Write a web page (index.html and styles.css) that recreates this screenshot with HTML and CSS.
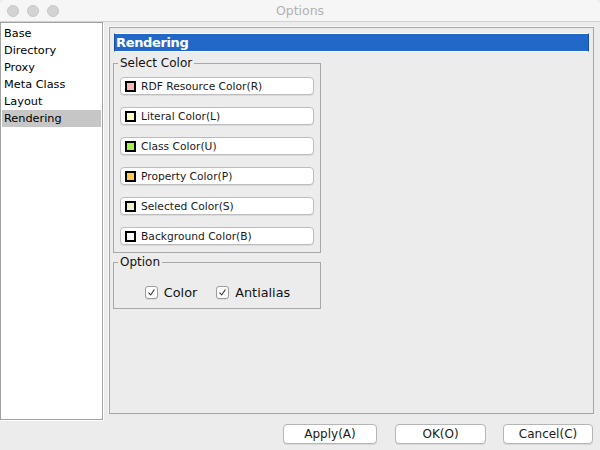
FILE: index.html
```html
<!DOCTYPE html>
<html>
<head>
<meta charset="utf-8">
<link rel="stylesheet" href="styles.css">
</head>
<body>
<div class="window">
  <div class="titlebar">
    <div class="lights"><span class="light"></span><span class="light"></span><span class="light"></span></div>
    <div class="title">Options</div>
    <div></div>
  </div>
  <div class="main">
    <ul class="sidebar">
      <li>Base</li>
      <li>Directory</li>
      <li>Proxy</li>
      <li>Meta Class</li>
      <li>Layout</li>
      <li class="selected">Rendering</li>
    </ul>
    <div class="panel">
      <div class="heading">Rendering</div>
      <fieldset class="group colors">
        <legend>Select Color</legend>
        <button class="color-btn"><span class="swatch pink"></span>RDF Resource Color(R)</button>
        <button class="color-btn"><span class="swatch yellow"></span>Literal Color(L)</button>
        <button class="color-btn"><span class="swatch lime"></span>Class Color(U)</button>
        <button class="color-btn"><span class="swatch orange"></span>Property Color(P)</button>
        <button class="color-btn"><span class="swatch selcol"></span>Selected Color(S)</button>
        <button class="color-btn"><span class="swatch white"></span>Background Color(B)</button>
      </fieldset>
      <fieldset class="group options">
        <legend>Option</legend>
        <div class="checks">
          <label class="check"><span class="box"><svg width="13" height="13" viewBox="0 0 13 13"><path d="M3.3 6.9 L5.5 9.4 L9.6 3.4" fill="none" stroke="#3a3a3a" stroke-width="1.3" stroke-linecap="round" stroke-linejoin="round"/></svg></span>Color</label>
          <label class="check"><span class="box"><svg width="13" height="13" viewBox="0 0 13 13"><path d="M3.3 6.9 L5.5 9.4 L9.6 3.4" fill="none" stroke="#3a3a3a" stroke-width="1.3" stroke-linecap="round" stroke-linejoin="round"/></svg></span>Antialias</label>
        </div>
      </fieldset>
    </div>
  </div>
  <div class="footer">
    <button class="btn apply">Apply(A)</button>
    <button class="btn ok">OK(O)</button>
    <button class="btn cancel">Cancel(C)</button>
  </div>
</div>
</body>
</html>
```

FILE: styles.css
```css
* { box-sizing: border-box; }
html, body { margin: 0; padding: 0; }
body { font-family: "DejaVu Sans", sans-serif; background: #ececec; }
.window { width: 600px; height: 450px; background: #ececec; display: flex; flex-direction: column; overflow: hidden; }

.titlebar { height: 22px; background: #f6f6f6; border-bottom: 1px solid #d2d2d2; display: grid; grid-template-columns: 1fr auto 1fr; align-items: center; border-radius: 5px 5px 0 0; }
.lights { display: flex; gap: 8px; padding-left: 7px; }
.light { width: 12px; height: 12px; border-radius: 50%; background: #d3d3d3; border: 1px solid #c8c8c8; }
.title { font-size: 12.5px; color: #b2b2b2; }

.main { display: flex; height: 398px; }
.sidebar { list-style: none; margin: 0; padding: 1px; width: 103px; height: 398px; background: #fff; border: 1px solid #a2a2a2; box-shadow: 1px 1px 0 #fff; }
.sidebar li { height: 17px; line-height: 17px; font-size: 11.3px; padding-left: 2px; color: #000; }
.sidebar li:first-child { margin-top: 1px; }
.sidebar li.selected { background: #c6c6c6; }

.panel { flex: 1; margin: 5px 6px 6px 6px; border: 1px solid #a6a6a6; box-shadow: -1px -1px 0 #fafafa; padding: 5px 4px; }
.heading { height: 19px; background: #2168c9; border: 1px solid #fdfdfd; border-left-color: #1b4f9a; border-right-color: #1b4f9a; color: #fff; font-weight: bold; font-size: 13px; letter-spacing: -0.35px; line-height: 17px; padding-left: 1px; }

.group { width: 208px; margin: 0 0 0 -1px; border: 1px solid #a8a8a8; padding: 0 6px 6px 6px; min-width: 0; }
.group legend { font-size: 12px; line-height: 13px; padding: 0 2px; margin-left: -2px; color: #111; }
.colors { margin-top: 5px; padding-top: 7px; padding-bottom: 7px; display: flex; flex-direction: column; gap: 12px; }
.color-btn { display: flex; align-items: center; height: 18px; width: 100%; margin: 0; padding: 0 0 0 4px; background: #fff; border: 1px solid #bdbdbd; border-radius: 4px; box-shadow: 0 1px 0 #dadada; font-family: "DejaVu Sans", sans-serif; font-size: 10.7px; color: #1a1a1a; text-align: left; }
.swatch { width: 11px; height: 11px; border: 2px solid #000; margin-right: 5px; flex: none; }
.pink { background: #f8b6b6; }
.yellow { background: #ffffc4; }
.lime { background: #a6f04a; }
.orange { background: #ffc852; }
.selcol { background: #eef0cc; }
.white { background: #fff; }

.options { margin-top: 3px; padding-top: 15px; padding-bottom: 7px; }
.checks { display: flex; justify-content: center; gap: 19px; height: 17px; align-items: center; padding-left: 1px; }
.check { display: flex; align-items: center; font-size: 12.8px; color: #111; }
.box { width: 13px; height: 13px; border: 1px solid #9c9c9c; border-radius: 3px; background: #fff; margin-right: 6px; display: flex; align-items: center; justify-content: center; box-shadow: 0 1px 0 #dcdcdc; }
.box svg { display: block; }

.footer { height: 30px; display: flex; justify-content: flex-end; padding: 4px 7px 0 0; }
.btn { height: 20px; margin: 0; padding: 0; background: #fff; border: 1px solid #b6b6b6; border-radius: 4px; box-shadow: 0 1px 0 #d8d8d8; font-family: "DejaVu Sans", sans-serif; font-size: 12px; color: #1a1a1a; }
.apply { width: 94px; margin-right: 18px; }
.ok { width: 91px; margin-right: 17px; }
.cancel { width: 90px; }
```
